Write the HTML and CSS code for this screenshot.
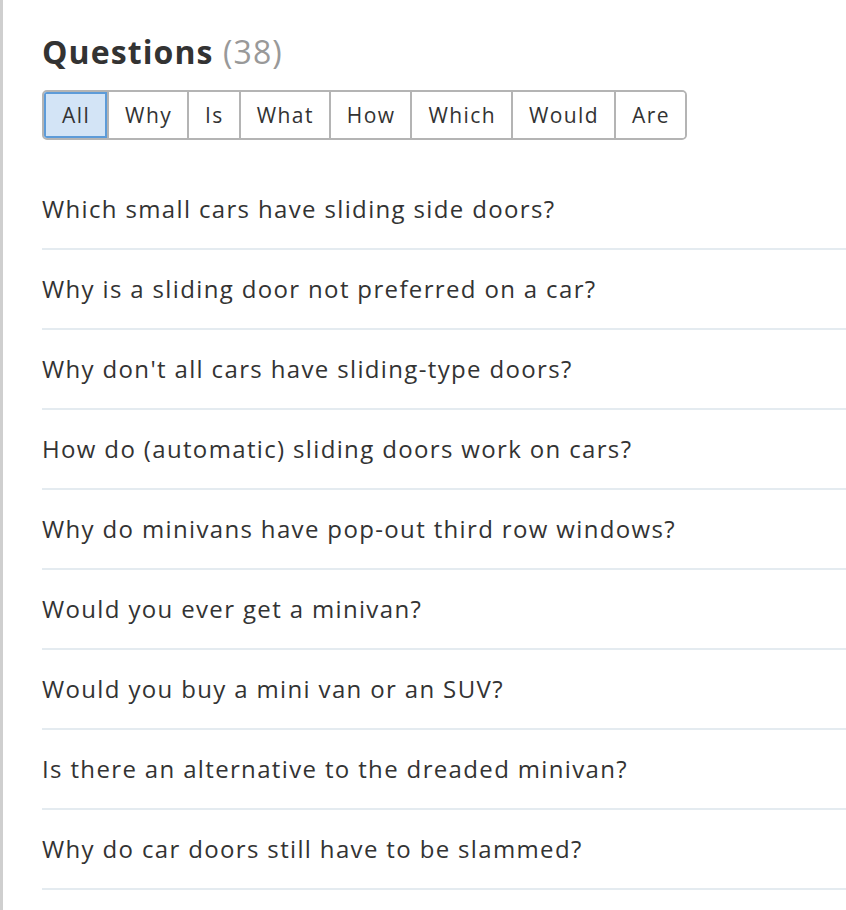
FILE: index.html
```html
<!DOCTYPE html>
<html>
<head>
<meta charset="utf-8">
<link rel="stylesheet" href="styles.css">
</head>
<body>
<div class="page">
  <h2 class="title">Questions <span class="count">(38)</span></h2>
  <div class="filters">
    <button class="filter active">All</button>
    <button class="filter">Why</button>
    <button class="filter">Is</button>
    <button class="filter">What</button>
    <button class="filter">How</button>
    <button class="filter">Which</button>
    <button class="filter">Would</button>
    <button class="filter">Are</button>
  </div>
  <ul class="questions">
    <li class="question">Which small cars have sliding side doors?</li>
    <li class="question">Why is a sliding door not preferred on a car?</li>
    <li class="question">Why don't all cars have sliding-type doors?</li>
    <li class="question">How do (automatic) sliding doors work on cars?</li>
    <li class="question">Why do minivans have pop-out third row windows?</li>
    <li class="question">Would you ever get a minivan?</li>
    <li class="question">Would you buy a mini van or an SUV?</li>
    <li class="question">Is there an alternative to the dreaded minivan?</li>
    <li class="question">Why do car doors still have to be slammed?</li>
  </ul>
</div>
</body>
</html>
```
FILE: styles.css
```css
html, body {
  margin: 0;
  padding: 0;
  background: #fff;
}
body {
  font-family: "Open Sans", "Noto Sans", sans-serif;
  color: #333;
}
.page {
  border-left: 3px solid #cfcfcf;
  min-height: 910px;
  padding: 30px 0 0 39px;
  box-sizing: border-box;
}
.title {
  margin: 0;
  font-size: 32px;
  font-weight: 700;
  line-height: 44px;
  letter-spacing: 1.1px;
  color: #333;
}
.count {
  font-weight: 400;
  color: #999;
}
.filters {
  display: inline-flex;
  margin-top: 16px;
  border: 2px solid #b4b4b4;
  border-radius: 5px;
  overflow: hidden;
}
.filter {
  font-family: inherit;
  font-size: 21px;
  letter-spacing: 1.4px;
  color: #333;
  background: #fff;
  border: none;
  border-left: 2px solid #b4b4b4;
  height: 46px;
  padding: 0 15px 0 16px;
  margin: 0;
}
.filter:first-child {
  border-left: none;
  padding: 0 17px 0 18px;
}
.filter.active {
  background: #d3e4f6;
  box-shadow: inset 0 0 0 2px #5d9bd8;
}
.questions {
  list-style: none;
  margin: 30px 0 0;
  padding: 0;
}
.question {
  font-size: 24px;
  letter-spacing: 1.35px;
  line-height: 78px;
  height: 78px;
  border-bottom: 2px solid #e4ebf0;
  color: #333;
}
```
